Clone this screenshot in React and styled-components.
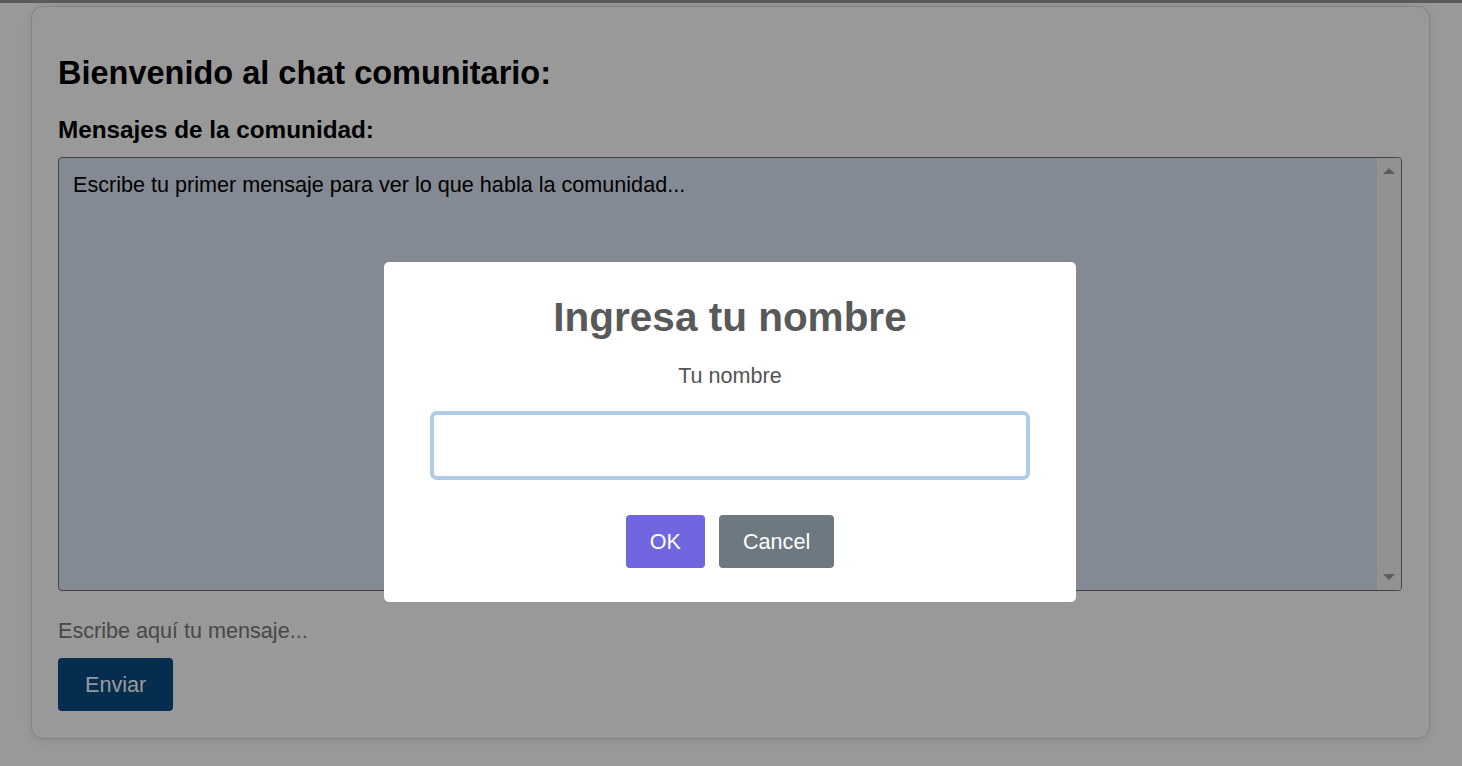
import React from 'react';
import styled, { createGlobalStyle } from 'styled-components';

const GlobalStyle = createGlobalStyle`
    html, body {
        margin: 0;
        padding: 0;
        background: #ffffff;
        font-family: "Liberation Sans", Arial, sans-serif;
    }
`

const TopStrip = styled.div`
    height: 3px;
    background: #969696;
`

const Page = styled.div`
    padding: 3px 32px 28px 31px;
`

const ChatCard = styled.div`
    border: 1px solid #dcdcdc;
    border-radius: 12px;
    background: #ffffff;
    box-shadow: 0 2px 10px rgba(0,0,0,0.08);
    padding: 48px 27px 27px 26px;
    display: flex;
    flex-direction: column;
    align-items: flex-start;
`

const Title = styled.h1`
    margin: 0;
    font-size: 32.5px;
    line-height: 37px;
    font-weight: bold;
    color: #000;
`

const SubTitle = styled.h3`
    margin: 24px 0 13px;
    font-size: 24.3px;
    line-height: 28px;
    font-weight: bold;
    color: #000;
`

// message list with a classic scrollbar rail at the right
const MessagesFrame = styled.div`
    box-sizing: border-box;
    width: 100%;
    height: 434px;
    display: flex;
    background: #dae6f5;
    border: 1px solid #727272;
    border-radius: 4px;
    overflow: hidden;
`

const MessagesContent = styled.div`
    flex: 1;
    padding: 14px 14px;
    font-size: 21.6px;
    line-height: 25px;
    color: #000;
    overflow: hidden;
`

const ScrollRail = styled.div`
    width: 24px;
    flex-shrink: 0;
    background: #f3f3f3;
    display: flex;
    flex-direction: column;
    justify-content: space-between;
    align-items: center;
    padding: 10px 0;
    box-sizing: border-box;
`

const Arrow = styled.span`
    width: 0;
    height: 0;
    border-left: 6px solid transparent;
    border-right: 6px solid transparent;
    ${p => p.$down
        ? 'border-top: 6px solid #9a9a9a;'
        : 'border-bottom: 6px solid #9a9a9a;'}
`

const MessageInput = styled.input`
    margin-top: 27px;
    width: 100%;
    border: none;
    outline: none;
    background: transparent;
    padding: 0;
    font-family: inherit;
    font-size: 21.6px;
    line-height: 24px;
    height: 25px;
    &::placeholder{
        color: #7a7a7a;
    }
`

const SendButton = styled.button`
    margin-top: 15px;
    background: #084b84;
    color: #ffffff;
    border: none;
    border-radius: 4px;
    padding: 0 27px;
    height: 53px;
    font-family: inherit;
    font-size: 21.6px;
`

const Backdrop = styled.div`
    position: fixed;
    inset: 0;
    background: rgba(0,0,0,0.4);
    display: flex;
    justify-content: center;
    align-items: flex-start;
    padding: 262px 2px 0 0;
`

const Modal = styled.div`
    width: 692px;
    box-sizing: border-box;
    background: #ffffff;
    border-radius: 5px;
    padding: 32px 46px 34px;
    display: flex;
    flex-direction: column;
    align-items: center;
`

const ModalTitle = styled.h2`
    margin: 0;
    font-size: 40.5px;
    line-height: 47px;
    font-weight: bold;
    color: #595959;
`

const ModalLabel = styled.label`
    margin-top: 22px;
    font-size: 21.6px;
    line-height: 25px;
    color: #545454;
`

const NameInput = styled.input`
    margin-top: 23px;
    box-sizing: border-box;
    width: 600px;
    height: 69px;
    border: 4px solid #afcde6;
    border-radius: 7px;
    outline: none;
    padding: 0 14px;
    font-family: inherit;
    font-size: 21.6px;
    background: #fff;
`

const Actions = styled.div`
    margin-top: 35px;
    display: flex;
    gap: 14px;
`

const ModalButton = styled.button`
    height: 53px;
    padding: 0 24px;
    border: none;
    border-radius: 4px;
    background: ${p => p.$variant === 'cancel' ? '#6e7881' : '#7066e0'};
    color: #ffffff;
    font-family: inherit;
    font-size: 21.6px;
`

export default function App() {
    return (
        <>
            <GlobalStyle />
            <TopStrip />
            <Page>
                <ChatCard>
                    <Title>Bienvenido al chat comunitario:</Title>
                    <SubTitle>Mensajes de la comunidad:</SubTitle>
                    <MessagesFrame>
                        <MessagesContent>
                            Escribe tu primer mensaje para ver lo que habla la comunidad...
                        </MessagesContent>
                        <ScrollRail>
                            <Arrow />
                            <Arrow $down />
                        </ScrollRail>
                    </MessagesFrame>
                    <MessageInput placeholder="Escribe aquí tu mensaje..." />
                    <SendButton>Enviar</SendButton>
                </ChatCard>
            </Page>
            <Backdrop>
                <Modal>
                    <ModalTitle>Ingresa tu nombre</ModalTitle>
                    <ModalLabel htmlFor="nombre">Tu nombre</ModalLabel>
                    <NameInput id="nombre" />
                    <Actions>
                        <ModalButton>OK</ModalButton>
                        <ModalButton $variant="cancel">Cancel</ModalButton>
                    </Actions>
                </Modal>
            </Backdrop>
        </>
    );
}
